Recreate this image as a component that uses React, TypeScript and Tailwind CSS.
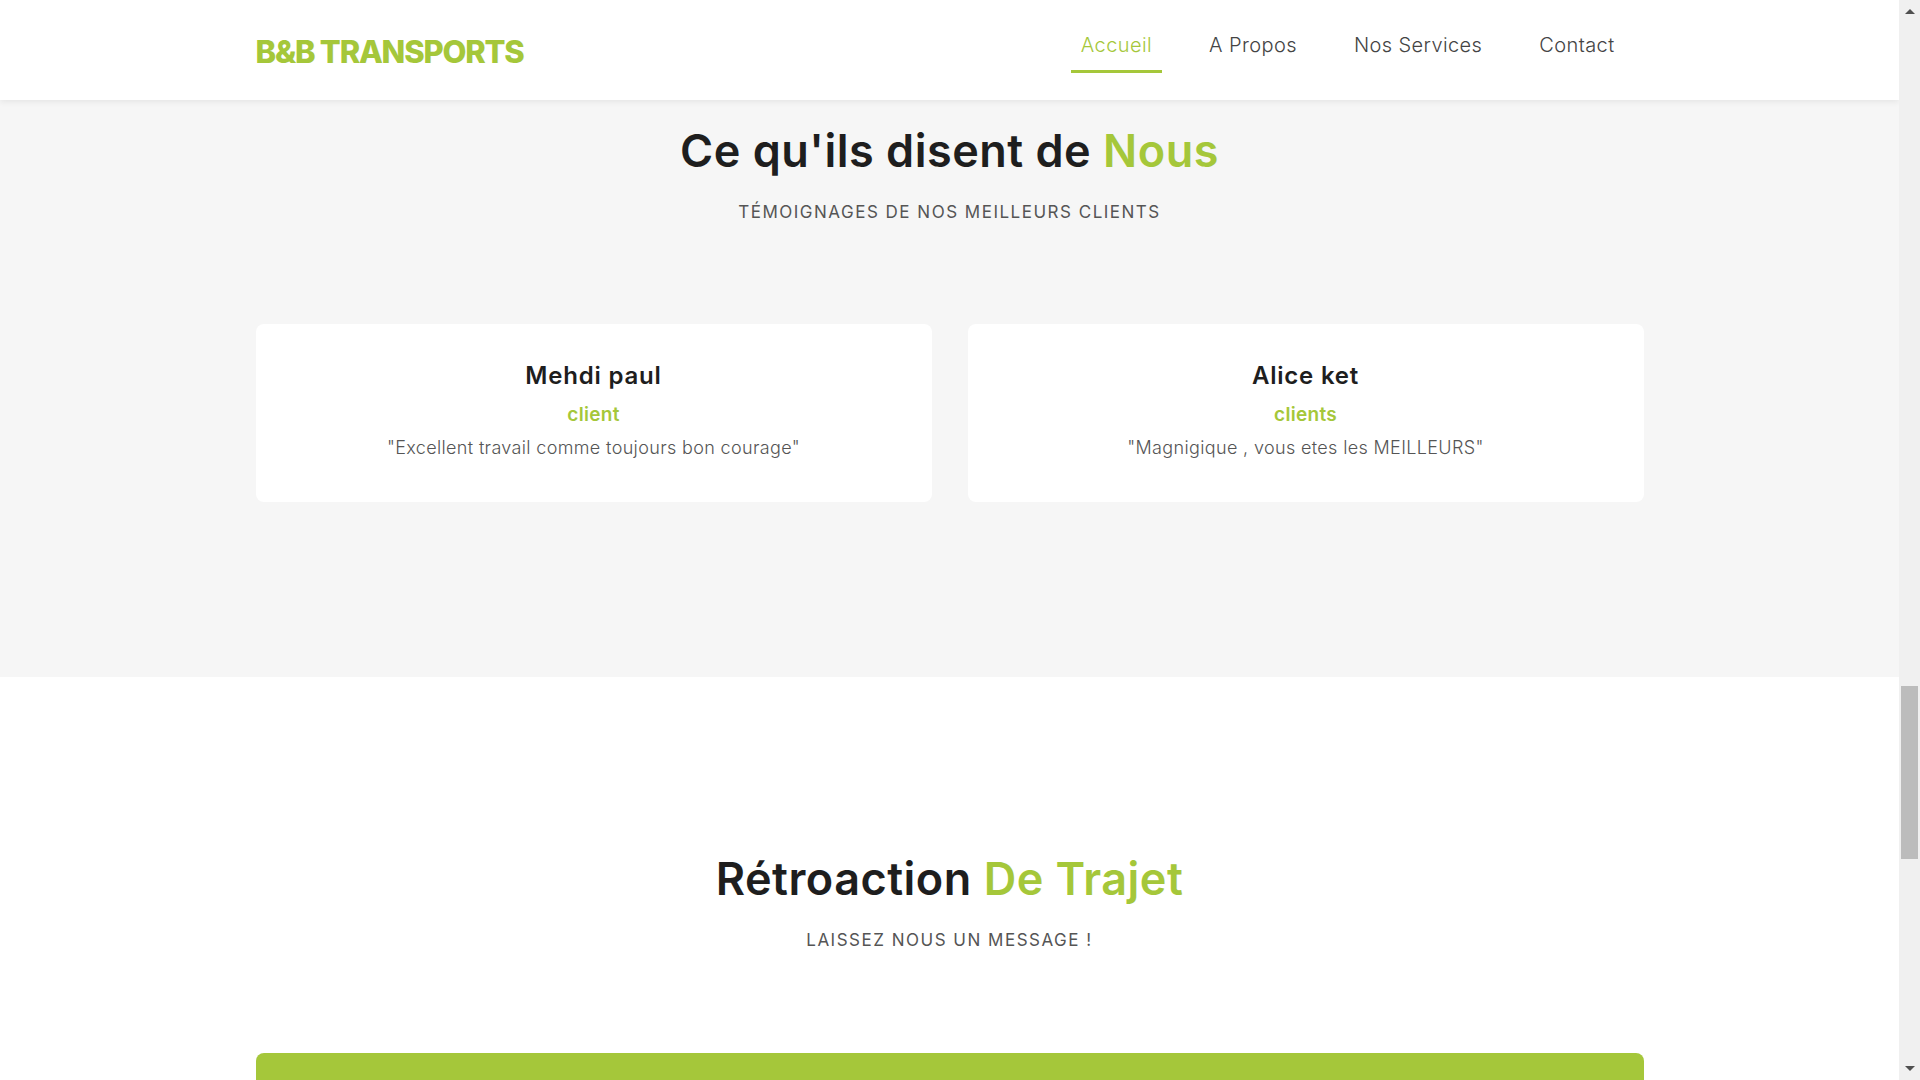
import React from 'react';

const NAV_LINKS = ['Accueil', 'A Propos', 'Nos Services', 'Contact'];

const TESTIMONIALS = [
  { name: 'Mehdi paul', role: 'client', text: '"Excellent travail comme toujours bon courage"' },
  { name: 'Alice ket', role: 'clients', text: '"Magnigique , vous etes les MEILLEURS"' },
];

function SectionTitle({ dark, green, sub }: { dark: string; green: string; sub: string }) {
  return (
    <div className="text-center">
      <h2 className="text-[45px] leading-[53px] font-semibold tracking-[0.5px] text-[#1e1e1e]">
        {dark} <span className="text-[#a5c73a]">{green}</span>
      </h2>
      <p className="mt-[23px] text-[17px] leading-[24px] tracking-[1.5px] text-[#555]">{sub}</p>
    </div>
  );
}

function Header() {
  return (
    <header className="relative z-10 h-[100px] bg-white shadow-[0_2px_6px_rgba(0,0,0,0.07)]">
      <div className="w-[1388px] mx-auto h-full flex justify-between">
        <div className="self-center mt-[5px] text-[31px] font-extrabold tracking-[-1.2px] text-[#a5c73a]">
          B&amp;B TRANSPORTS
        </div>
        <nav className="flex items-start gap-[37px] pt-[31px] mr-[19px]">
          {NAV_LINKS.map((link, i) => (
            <a
              key={link}
              href="#"
              className={
                i === 0
                  ? 'px-[10px] pb-[11px] leading-[28px] text-[20px] font-light tracking-[0.4px] text-[#a5c73a] border-b-[3px] border-[#a5c73a]'
                  : 'px-[10px] pb-[11px] leading-[28px] text-[20px] font-light tracking-[0.4px] text-[#444] border-b-[3px] border-transparent'
              }
            >
              {link}
            </a>
          ))}
        </nav>
      </div>
    </header>
  );
}

// browser scrollbar as it appears in the capture
function ScrollBar() {
  return (
    <aside className="w-[21px] h-full bg-[#f0f0f0] flex flex-col items-center">
      <svg width="10" height="5" viewBox="0 0 10 5" className="mt-[9px] shrink-0">
        <polygon points="0,5 5,0 10,5" fill="#505050" />
      </svg>
      <div className="mt-[672px] h-[173px] w-[17px] bg-[#bcbcbc] shrink-0" />
      <div className="flex-1" />
      <svg width="10" height="5" viewBox="0 0 10 5" className="mb-[9px] shrink-0">
        <polygon points="0,0 10,0 5,5" fill="#505050" />
      </svg>
    </aside>
  );
}

function App() {
  return (
    <div className="h-screen flex overflow-hidden font-['Inter','Noto_Sans',sans-serif] bg-white text-[#1e1e1e]">
      <main className="flex-1 h-full overflow-hidden">
        <Header />

        {/* Temoignages */}
        <section className="bg-[#f6f6f6] pt-[24px] pb-[175px]">
          <SectionTitle dark="Ce qu'ils disent de" green="Nous" sub="TÉMOIGNAGES DE NOS MEILLEURS CLIENTS" />
          <div className="mt-[100px] w-[1388px] mx-auto grid grid-cols-2 gap-[36px]">
            {TESTIMONIALS.map((t) => (
              <div key={t.name} className="bg-white rounded-[8px] h-[178px] pt-[37px] text-center">
                <h3 className="text-[24px] leading-[30px] font-semibold tracking-[0.8px] text-[#1e1e1e]">{t.name}</h3>
                <p className="mt-[12px] text-[19px] leading-[24px] font-semibold tracking-[0.3px] text-[#a5c73a]">
                  {t.role}
                </p>
                <p className="mt-[9px] text-[18px] leading-[24px] font-light tracking-[0.35px] text-[#555]">{t.text}</p>
              </div>
            ))}
          </div>
        </section>

        {/* Retroaction */}
        <section className="pt-[175px]">
          <SectionTitle dark="Rétroaction" green="De Trajet" sub="LAISSEZ NOUS UN MESSAGE !" />
          <div className="mt-[101px] w-[1388px] mx-auto h-[80px] rounded-t-[8px] bg-[#a5c73a]" />
        </section>
      </main>
      <ScrollBar />
    </div>
  );
}

export default App;
